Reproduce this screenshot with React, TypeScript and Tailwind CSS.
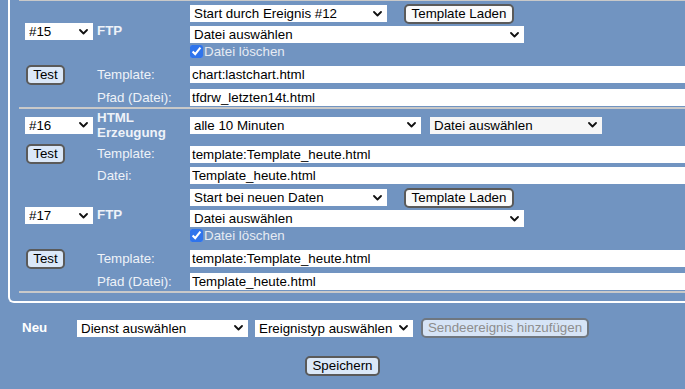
import React from "react";

const FONT = { fontFamily: '"Liberation Sans", Arial, sans-serif' };

function Chevron() {
  return (
    <svg
      width="9"
      height="6"
      viewBox="0 0 9 6"
      className="pointer-events-none absolute right-[5px] top-1/2 -translate-y-1/2"
    >
      <path d="M1 1 L4.5 4.5 L8 1" fill="none" stroke="#111" strokeWidth="1.8" strokeLinecap="round" strokeLinejoin="round" />
    </svg>
  );
}

function Sel({ value, w, gray }: { value: string; w: string; gray?: boolean }) {
  return (
    <div className={`relative ${w} h-[17px] shrink-0`}>
      <select
        defaultValue={value}
        className={`block appearance-none w-full h-full border-0 outline-none ${gray ? "bg-[#f6f6f6]" : "bg-white"} text-black text-[13.33px] leading-[17px] pl-[4px] pr-[16px] py-0 m-0 rounded-none`}
        style={FONT}
      >
        <option>{value}</option>
      </select>
      <Chevron />
    </div>
  );
}

function Inp({ value }: { value: string }) {
  return (
    <input
      readOnly
      value={value}
      className="block w-[540px] h-[17px] border-0 outline-none bg-white text-black text-[13.33px] leading-[17px] px-[2px] py-0 m-0"
      style={FONT}
    />
  );
}

function Btn({ children, w, blue, disabled }: { children: React.ReactNode; w: string; blue?: boolean; disabled?: boolean }) {
  return (
    <button
      disabled={disabled}
      className={`${w} h-[20px] shrink-0 rounded-[5px] border-2 ${disabled ? "border-[#6f7780] text-[#8d8d8d] bg-[#d6e4f6]" : "border-[#5a5a5a] text-black"} ${blue && !disabled ? "bg-[#dbe8f8]" : ""} ${!blue && !disabled ? "bg-[#fafafa]" : ""} text-[13.33px] leading-[16px] p-0 flex items-center justify-center whitespace-nowrap`}
      style={FONT}
    >
      {children}
    </button>
  );
}

function Label({ children, bold }: { children: React.ReactNode; bold?: boolean }) {
  return (
    <div className={`text-[13.33px] text-[#eef2f8] whitespace-nowrap ${bold ? "font-bold" : ""}`} style={FONT}>
      {children}
    </div>
  );
}

function Check() {
  return (
    <div className="flex items-center gap-[1px]">
      <input type="checkbox" defaultChecked className="block w-[13px] h-[13px] m-0 accent-[#2f74ec]" />
      <span className="text-[13.33px] text-[#e6ebf3]" style={FONT}>
        Datei löschen
      </span>
    </div>
  );
}

function FtpBlock({ num, start, template, pfad }: { num: string; start: string; template: string; pfad: string }) {
  return (
    <div className="grid grid-cols-[78px_93px_1fr] grid-rows-[25px_17px_17px_29px_17px]">
      <div className="col-start-1 row-start-1 row-span-3 flex items-center pl-[6px] pt-[2px]">
        <Sel value={num} w="w-[68px]" />
      </div>
      <div className="col-start-2 row-start-1 row-span-3 flex items-center pt-[1px]">
        <Label bold>FTP</Label>
      </div>
      <div className="col-start-3 row-start-1 flex items-center">
        <Sel value={start} w="w-[197px]" />
        <div className="ml-[17px]">
          <Btn w="w-[110px]">Template Laden</Btn>
        </div>
      </div>
      <div className="col-start-3 row-start-2 flex items-center">
        <Sel value="Datei auswählen" w="w-[334px]" />
      </div>
      <div className="col-start-3 row-start-3 flex items-center">
        <Check />
      </div>
      <div className="col-start-1 row-start-4 flex items-center pl-[7px]">
        <Btn w="w-[39px]" blue>
          Test
        </Btn>
      </div>
      <div className="col-start-2 row-start-4 flex items-center">
        <Label>Template:</Label>
      </div>
      <div className="col-start-3 row-start-4 flex items-center">
        <Inp value={template} />
      </div>
      <div className="col-start-2 row-start-5 flex items-center">
        <Label>Pfad (Datei):</Label>
      </div>
      <div className="col-start-3 row-start-5 flex items-center">
        <Inp value={pfad} />
      </div>
    </div>
  );
}

function HtmlBlock() {
  return (
    <div className="grid grid-cols-[78px_93px_1fr] grid-rows-[32px_25px_19px]">
      <div className="col-start-1 row-start-1 flex items-center pl-[6px]">
        <Sel value="#16" w="w-[68px]" />
      </div>
      <div className="col-start-2 row-start-1 flex items-center">
        <div className="text-[13.33px] font-bold text-[#eef2f8] leading-[15px]" style={FONT}>
          HTML
          <br />
          Erzeugung
        </div>
      </div>
      <div className="col-start-3 row-start-1 flex items-center gap-[9px]">
        <Sel value="alle 10 Minuten" w="w-[231px]" />
        <Sel value="Datei auswählen" w="w-[172px]" gray />
      </div>
      <div className="col-start-1 row-start-2 flex items-center pl-[7px]">
        <Btn w="w-[39px]" blue>
          Test
        </Btn>
      </div>
      <div className="col-start-2 row-start-2 flex items-center">
        <Label>Template:</Label>
      </div>
      <div className="col-start-3 row-start-2 flex items-center pt-[1px]">
        <Inp value="template:Template_heute.html" />
      </div>
      <div className="col-start-2 row-start-3 flex items-center">
        <Label>Datei:</Label>
      </div>
      <div className="col-start-3 row-start-3 flex items-center">
        <Inp value="Template_heute.html" />
      </div>
    </div>
  );
}

export default function App() {
  return (
    <div className="w-full h-[389px] overflow-hidden bg-[#7194c1]" style={FONT}>
      <div className="ml-[8px] w-[720px] border-l-2 border-b-2 border-white rounded-bl-[6px] pl-[9px] pb-[8px]">
        <div className="h-[1px] bg-[#c9c9c9]" />
        <FtpBlock num="#15" start="Start durch Ereignis #12" template="chart:lastchart.html" pfad="tfdrw_letzten14t.html" />
        <div className="mt-[1px] h-[2px] bg-[#c9c9c9]" />
        <HtmlBlock />
        <FtpBlock num="#17" start="Start bei neuen Daten" template="template:Template_heute.html" pfad="Template_heute.html" />
        <div className="mt-[1px] h-[2px] bg-[#c9c9c9]" />
      </div>
      <div className="mt-[14px] h-[22px] flex items-center pl-[22px]">
        <div className="w-[55px] text-[13.33px] font-bold text-white">Neu</div>
        <Sel value="Dienst auswählen" w="w-[171px]" />
        <div className="ml-[7px]">
          <Sel value="Ereignistyp auswählen" w="w-[158px]" />
        </div>
        <div className="ml-[8px]">
          <Btn w="w-[168px]" disabled>
            Sendeereignis hinzufügen
          </Btn>
        </div>
      </div>
      <div className="mt-[16px] h-[22px] flex items-center justify-center">
        <Btn w="w-[75px]" blue>
          Speichern
        </Btn>
      </div>
    </div>
  );
}
